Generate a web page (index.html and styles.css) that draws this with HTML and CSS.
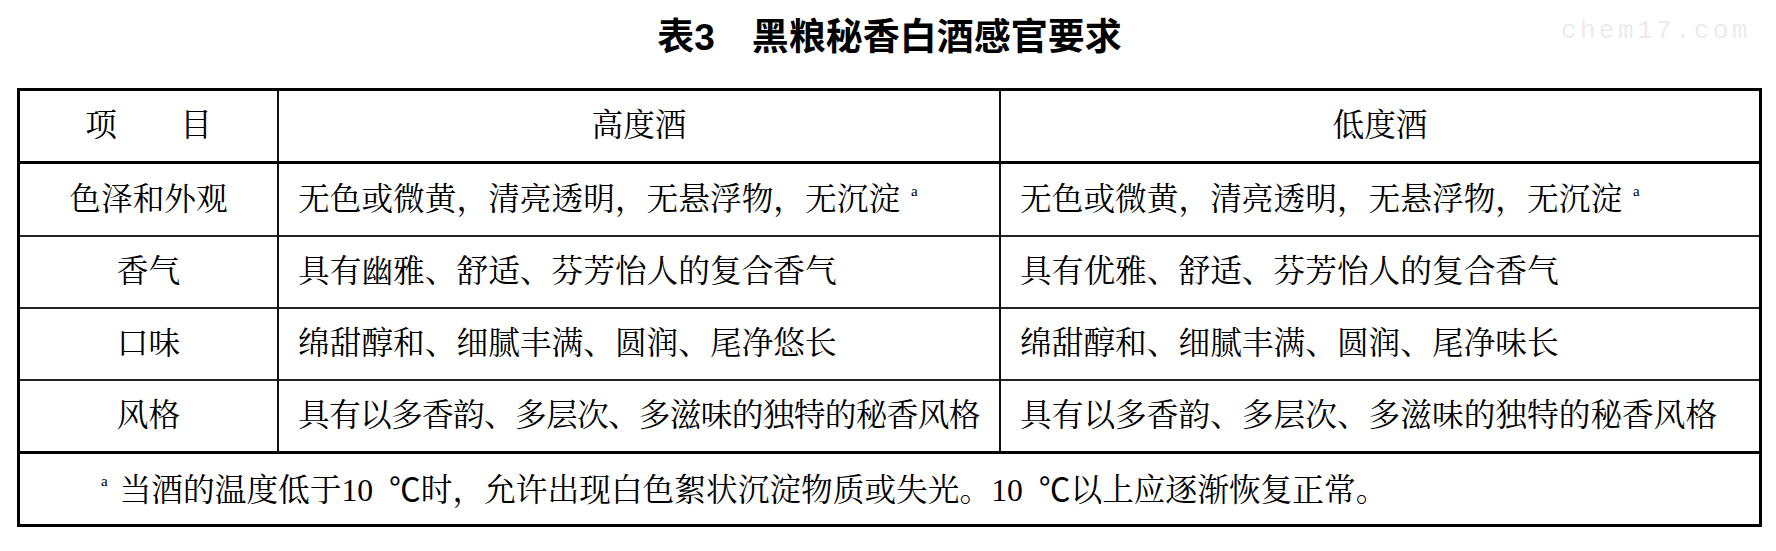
FILE: index.html
```html
<!DOCTYPE html>
<html lang="zh-CN">
<head>
<meta charset="utf-8">
<title>表3 黑粮秘香白酒感官要求</title>
<link rel="stylesheet" href="styles.css">
</head>
<body>
<div class="page">
  <header class="caption">
    <h1 class="title">表3　黑粮秘香白酒感官要求</h1>
    <span class="watermark">chem17.com</span>
  </header>
  <div class="sheet">
    <div class="cell head item"><span>项　　目</span></div>
    <div class="cell head"><span>高度酒</span></div>
    <div class="cell head last"><span>低度酒</span></div>

    <div class="cell item"><span>色泽和外观</span></div>
    <div class="cell text"><span>无色或微黄，清亮透明，无悬浮物，无沉淀<sup class="note">a</sup></span></div>
    <div class="cell text last"><span>无色或微黄，清亮透明，无悬浮物，无沉淀<sup class="note">a</sup></span></div>

    <div class="cell item"><span>香气</span></div>
    <div class="cell text"><span>具有幽雅、舒适、芬芳怡人的复合香气</span></div>
    <div class="cell text last"><span>具有优雅、舒适、芬芳怡人的复合香气</span></div>

    <div class="cell item"><span>口味</span></div>
    <div class="cell text"><span>绵甜醇和、细腻丰满、圆润、尾净悠长</span></div>
    <div class="cell text last"><span>绵甜醇和、细腻丰满、圆润、尾净味长</span></div>

    <div class="cell item end"><span>风格</span></div>
    <div class="cell text end tight"><span>具有以多香韵、多层次、多滋味的独特的秘香风格</span></div>
    <div class="cell text end last"><span>具有以多香韵、多层次、多滋味的独特的秘香风格</span></div>

    <div class="cell foot"><span><sup class="note lead">a</sup>当酒的温度低于10 <span class="unit">℃</span>时，允许出现白色絮状沉淀物质或失光。10 <span class="unit">℃</span>以上应逐渐恢复正常。</span></div>
  </div>
</div>
</body>
</html>
```

FILE: styles.css
```css
html, body {
  margin: 0;
  padding: 0;
  background: #ffffff;
}

.page {
  position: relative;
  width: 1745px;
  margin-left: 17px;
  padding-top: 19px;
  color: #000;
  font-family: "Liberation Serif", "Noto Serif CJK SC", "Noto Sans CJK SC", serif;
}

.caption {
  margin-bottom: 32px;
}

.title {
  margin: 0;
  font-family: "Liberation Sans", "Noto Sans CJK SC", sans-serif;
  font-size: 37px;
  line-height: 37px;
  font-weight: 700;
  text-align: center;
  color: #000;
}

.watermark {
  position: absolute;
  left: 1544px;
  top: 18px;
  font-family: "Liberation Mono", "DejaVu Sans Mono", monospace;
  font-size: 26px;
  line-height: 26px;
  letter-spacing: 3.4px;
  color: #ececec;
}

.sheet {
  display: grid;
  grid-template-columns: 259px 722px 758px;
  grid-template-rows: 73px 73px 72px 72px 73px 70px;
  box-sizing: border-box;
  width: 1745px;
  border: 3px solid #000;
}

.cell {
  box-sizing: border-box;
  display: flex;
  align-items: center;
  justify-content: center;
  border-right: 2px solid #111;
  border-bottom: 2px solid #222;
  font-size: 31.7px;
  line-height: 1;
  white-space: nowrap;
}

.cell.last {
  border-right: none;
}

.cell.head {
  border-bottom: 3px solid #000;
}

.cell.end {
  border-bottom: 3px solid #000;
}

.cell.text {
  justify-content: flex-start;
  padding-left: 19px;
}

.cell.tight {
  letter-spacing: -0.7px;
}

.cell.foot {
  grid-column: 1 / 4;
  justify-content: flex-start;
  padding-left: 81px;
  border: none;
}

.unit {
  font-family: "Noto Sans CJK SC", sans-serif;
  margin-left: 8px;
}

.note {
  font-family: "Liberation Serif", serif;
  font-size: 15px;
  line-height: 1;
  vertical-align: 14px;
  margin-left: 11px;
  letter-spacing: 0;
}

.note.lead {
  margin-left: 0;
  margin-right: 12px;
  vertical-align: 15px;
}
```
